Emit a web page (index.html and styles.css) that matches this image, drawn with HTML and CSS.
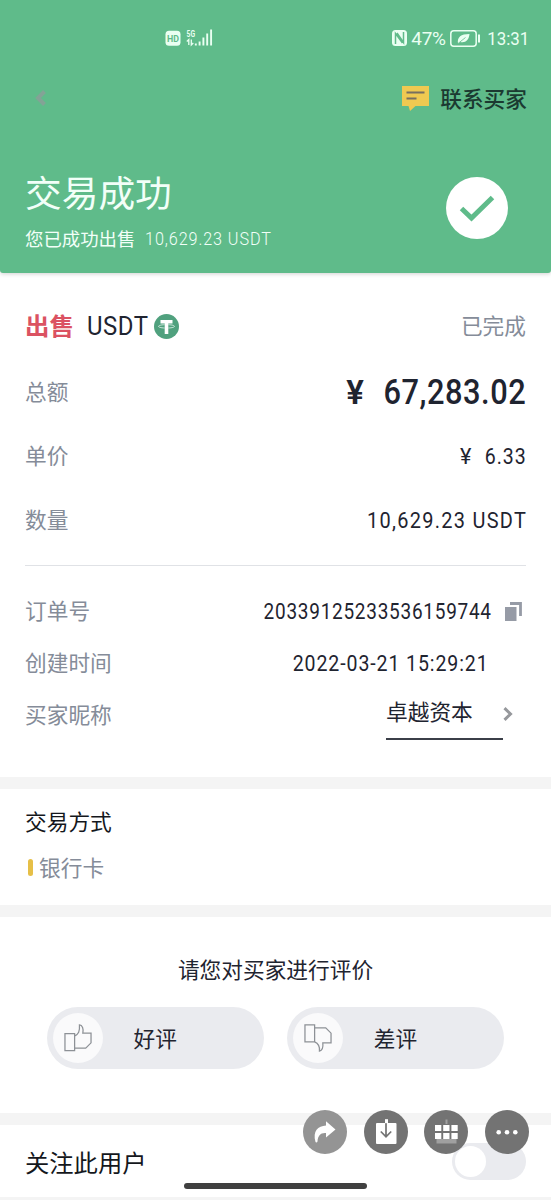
FILE: index.html
```html
<!DOCTYPE html>
<html lang="zh-CN">
<head>
<meta charset="utf-8">
<title>交易成功</title>
<link rel="stylesheet" href="styles.css">
</head>
<body>
<main class="screen">
  <header class="header">
    <div class="status">
      <svg class="status-signal" width="50" height="20" viewBox="0 0 50 20">
        <rect x="0.500" y="2.800" width="15" height="15" rx="3.500" fill="#eafff2"/>
        <text x="8" y="13.700" class="hd" text-anchor="middle" textLength="12" lengthAdjust="spacingAndGlyphs">HD</text>
        <text x="21.500" y="8.500" class="fiveg" textLength="8.500" lengthAdjust="spacingAndGlyphs">5G</text>
        <path d="M23.800 17v-5.500l-2 2M26.300 11.500v5.500l2-2" fill="none" stroke="#eafff2" stroke-width="1.300"/>
        <path d="M30.800 17.500v-2M34.600 17.500v-4M38.400 17.500v-8M42.200 17.500V5.500M46.100 17.500V1.500" stroke="#eafff2" stroke-width="1.900"/>
      </svg>
      <div class="status-right">
        <svg width="15" height="16" viewBox="0 0 15 16">
          <rect width="15" height="16" rx="3.500" fill="#eafff2"/>
          <path d="M3.500 14V3.500l7 9.500M11.500 2v10.500L5 3" fill="none" stroke="#5fbb8a" stroke-width="1.500"/>
        </svg>
        <span class="num battery">47%</span>
        <svg class="battery-icon" width="31" height="17" viewBox="0 0 31 17">
          <rect x="0.800" y="0.800" width="25.400" height="15.400" rx="3" fill="none" stroke="#eafff2" stroke-width="1.500"/>
          <path d="M29 4.500v8" stroke="#eafff2" stroke-width="2"/>
          <path d="M8 13.500c-1-6.500 3-9.500 11.500-9.500-.5 6-4 9-9 8z" fill="#eafff2"/>
          <path d="M8 13.500l7.500-6" stroke="#5fbb8a" stroke-width=".8"/>
        </svg>
        <span class="num clock">13:31</span>
      </div>
    </div>
    <nav class="nav">
      <svg class="back" width="12" height="16" viewBox="0 0 12 16"><path d="M10.500 1.500L4 8L10.500 14.500" fill="none" stroke="#83a396" stroke-width="4"/></svg>
      <div class="contact">
        <svg width="27" height="26" viewBox="0 0 27 26">
          <path d="M0 1h27v20H13.500L8 26l-1.500-5H0z" fill="#efc951"/>
          <path d="M4.500 7.500h18M4.500 13.500h10" stroke="#776f60" stroke-width="2"/>
        </svg>
        <span>联系买家</span>
      </div>
    </nav>
    <div class="hero">
      <div>
        <h1 class="hero-title">交易成功</h1>
        <p class="hero-sub"><span>您已成功出售</span><span class="num hero-num">10,629.23 USDT</span></p>
      </div>
      <svg width="62" height="62" viewBox="0 0 62 62"><circle cx="31" cy="31" r="31" fill="#fff"/><path d="M15.500 31.500L25.500 41L46.500 20.500" fill="none" stroke="#5fbb8a" stroke-width="5"/></svg>
    </div>
  </header>

  <section class="order">
    <div class="row row-head">
      <div class="coin">
        <strong class="sell">出售</strong>
        <span class="num usdt">USDT</span>
        <svg width="25" height="25" viewBox="0 0 25 25"><circle cx="12.500" cy="12.500" r="12.500" fill="#50a17e"/><path d="M6.500 6h12v3.400h-4.200V20h-3.600V9.400H6.500z" fill="#fff"/><path d="M10.700 10.700C2.500 11 2.500 13.700 10.700 14M14.300 10.700c8.200.3 8.200 3 0 3.300" fill="none" stroke="#e5f5ed" stroke-width=".8"/></svg>
      </div>
      <span class="label">已完成</span>
    </div>
    <div class="row"><span class="label">总额</span><span class="total"><span class="num yen-big">¥</span><span class="num total-num">67,283.02</span></span></div>
    <div class="row"><span class="label">单价</span><span class="price"><span class="num yen">¥</span><span class="num price-num">6.33</span></span></div>
    <div class="row"><span class="label">数量</span><span class="num amount">10,629.23 USDT</span></div>
    <hr class="divider">
    <div class="row detail"><span class="label">订单号</span>
      <span class="order-no"><span class="num order-num">20339125233536159744</span>
      <svg width="17" height="19" viewBox="0 0 17 19"><path d="M0 5h11.500v14H0z" fill="#969ba6"/><path d="M5 1.500h10.500v12.500" fill="none" stroke="#969ba6" stroke-width="2.800"/></svg></span>
    </div>
    <div class="row detail"><span class="label">创建时间</span><span class="num created">2022-03-21 15:29:21</span></div>
    <div class="row detail"><span class="label">买家昵称</span>
      <span class="buyer"><span class="buyer-name">卓越资本</span>
      <svg width="10" height="14" viewBox="0 0 10 14"><path d="M1.500 1.200L7.500 7L1.500 12.800" fill="none" stroke="#96989c" stroke-width="3"/></svg></span>
    </div>
  </section>

  <section class="method">
    <h2 class="method-title">交易方式</h2>
    <p class="bank"><i class="bank-mark"></i>银行卡</p>
  </section>

  <section class="rating">
    <p class="rating-title">请您对买家进行评价</p>
    <div class="pills">
      <button class="pill"><span class="disc"><svg width="28" height="28" viewBox="0 0 29 29"><path d="M1 10h10v17.500H1zM11 12.500c4-2 5.500-4.500 5-11.500 3 0 4.500 4 3.500 8.500H28v10L22.500 25H11" fill="none" stroke="#8d9196" stroke-width="1.300"/></svg></span><span class="pill-text">好评</span></button>
      <button class="pill"><span class="disc"><svg width="28" height="28" viewBox="0 0 29 29"><path d="M1 1h10v17.500H1zM11 4h11.500L28 9.500v10h-8.500c.5 5-.5 8-3.500 8.500.5-5-1.500-8-5-9.500" fill="none" stroke="#8d9196" stroke-width="1.300"/></svg></span><span class="pill-text">差评</span></button>
    </div>
  </section>

  <section class="follow">
    <span class="follow-text">关注此用户</span>
    <span class="toggle"><i class="knob"></i></span>
  </section>

  <div class="tools">
    <svg width="44" height="44" viewBox="0 0 44 44"><circle cx="22" cy="22" r="22" fill="#949494"/><path d="M12.500 32C9.500 21 15 16 23 15.500v-4.300L32.500 19.500 23 27.500v-4.500c-5.500-.5-8 2.500-8.500 8.500-.2 1-1.600 1.200-2 .5z" fill="#fff"/></svg>
    <svg width="44" height="44" viewBox="0 0 44 44"><circle cx="22" cy="22" r="22" fill="#737373"/><rect x="12" y="13" width="20.500" height="21" rx="1" fill="#fff"/><path d="M22 12v14.500M16.800 21.500l5.200 5.300 5.200-5.300" fill="none" stroke="#737373" stroke-width="1.700"/><path d="M22.500 9.200v4" stroke="#fff" stroke-width="3"/></svg>
    <svg width="44" height="44" viewBox="0 0 44 44"><circle cx="22" cy="22" r="22" fill="#737373"/><path d="M12.500 29h20v4.500h-20zM21.500 9.500h2V14h-2z" fill="#a0a0a0"/><path d="M11 15h6.300v6H11zM19.200 15h6.300v6h-6.300zM27.400 15h6.300v6h-6.300zM11 23h6.300v6H11zM19.200 23h6.300v6h-6.300zM27.400 23h6.300v6h-6.300z" fill="#fff"/></svg>
    <svg width="44" height="44" viewBox="0 0 44 44"><circle cx="22" cy="22" r="22" fill="#737373"/><g fill="#fff"><circle cx="13.700" cy="22.200" r="2.300"/><circle cx="22" cy="22.200" r="2.300"/><circle cx="30.300" cy="22.200" r="2.300"/></g></svg>
  </div>
  <div class="home-bar"></div>
</main>
</body>
</html>
```
FILE: styles.css
```css
* { box-sizing: border-box; }
body, h1, h2, p { margin: 0; font-weight: 400; }
body {
  background: #fff;
  color: #1f2430;
  font: 21.7px/32px "Noto Sans CJK SC", sans-serif;
}
svg { display: block; flex: none; }
.screen { position: relative; width: 551px; height: 1200px; overflow: hidden; }
.num { font-family: Roboto, "Noto Sans CJK SC", sans-serif; white-space: nowrap; display: inline-block; transform-origin: right; }

.header {
  height: 273px;
  background: #5fbb8a;
  border-radius: 0 0 3px 3px;
  box-shadow: 0 1px 4px #0000002e;
}
.status { height: 76px; padding: 0 22px 0 165px; display: flex; align-items: center; justify-content: space-between; color: #eafff2; }
.hd { font: 700 9.5px Roboto, sans-serif; fill: #5fbb8a; }
.fiveg { font: 700 9.5px Roboto, sans-serif; fill: #eafff2; }
.status-right { display: flex; align-items: center; }
.battery { font-size: 19px; margin: 2px 4px 0 4px; letter-spacing: -.3px; }
.clock { font-size: 19px; margin: 2px 0 0 1px; transform: scaleX(.89); }
.nav { height: 44px; padding: 0 24px 0 34px; display: flex; align-items: center; justify-content: space-between; }
.contact { display: flex; align-items: center; gap: 11px; color: #1b3a31; font-weight: 500; }
.hero { height: 153px; padding: 23px 43px 0 25px; display: flex; justify-content: space-between; color: #f2fff8; }
.hero > svg { margin-top: 34px; }
.hero-title { font-size: 36.7px; line-height: 54px; padding-top: 21px; margin-bottom: 5px; }
.hero-sub { font-size: 18.4px; line-height: 30px; display: flex; gap: 10px; }
.hero-num { font-size: 18px; font-weight: 300; letter-spacing: 1px; transform: scaleX(.9); transform-origin: left; padding-top: 1px; }

.order { height: 516px; padding: 20px 25px 0; border-bottom: 12px solid #f4f4f4; }
.row { height: 64px; display: flex; align-items: center; justify-content: space-between; }
.row-head { height: 67px; padding-bottom: 1px; }
.label { color: #858c99; padding-bottom: 2px; }
.coin { display: flex; align-items: center; }
.sell { font-size: 24.4px; color: #db5262; font-weight: 700; padding-bottom: 2px; }
.usdt { font-size: 26px; margin: 0 5px 0 13px; width: 62px; transform: scaleX(.92); transform-origin: left; letter-spacing: .6px; }
.total, .price { display: flex; align-items: center; }
.yen-big { font-size: 33px; font-weight: 600; margin-right: 15px; padding-top: 2px; }
.total-num { font-size: 35px; font-weight: 500; letter-spacing: .6px; margin-left: -15px; padding-top: 2px; transform: scaleX(.88); }
.yen { margin-right: 10px; padding-top: 1px; }
.price-num { letter-spacing: 1.1px; margin: 0 -1px; padding-top: 1px; transform: scaleX(.9); }
.amount { letter-spacing: 1.4px; margin-right: -1px; padding-top: 1px; transform: scaleX(.92); }
.divider { height: 1px; border: 0; margin: 13px 0 19px; background: #e0e2e6; }
.detail { height: 52px; }
.order-no { display: flex; align-items: center; gap: 14px; padding-right: 4px; }
.order-num { letter-spacing: .85px; margin-right: -1px; padding-top: 1px; transform: scaleX(.875); }
.created { margin-right: 37px; letter-spacing: 1px; padding-top: 1px; transform: scaleX(.9); }
.buyer { display: flex; align-items: center; padding: 0 13px 3px 0; }
.buyer-name { width: 117px; height: 52px; padding-top: 7px; border-bottom: 2px solid #3b3f48; }

.method { height: 128px; padding: 16px 25px 0; border-bottom: 12px solid #f4f4f4; color: #14171c; }
.method-title { font-size: 21.7px; line-height: 32px; }
.bank { display: flex; align-items: center; color: #858c99; margin-top: 14px; }
.bank-mark { width: 5px; height: 17px; margin: 0 6.500px 0 2.500px; border-radius: 3px; background: #e6bf47; }

.rating { height: 208px; padding: 36px 47px 0; border-bottom: 12px solid #f4f4f4; }
.rating-title { text-align: center; line-height: 32px; }
.pills { display: flex; gap: 23.500px; margin-top: 22px; }
.pill { width: 217px; height: 62px; border: 0; border-radius: 31px; padding: 0 6px 0 5.500px; background: #eaebef; display: flex; align-items: center; font: inherit; color: inherit; }
.disc { width: 50px; height: 50px; border-radius: 50%; background: #fafafb; display: flex; align-items: center; justify-content: center; }
.pill-text { margin-left: 31px; }

.follow { height: 75px; padding: 0 25px; border-bottom: 3px solid #f4f4f4; display: flex; align-items: center; justify-content: space-between; font-size: 24.3px; color: #14171c; }
.follow-text { padding-top: 1px; }
.toggle { width: 74px; height: 37px; border-radius: 19px; padding: 3px; background: #eaebef; }
.knob { display: block; width: 31px; height: 31px; border-radius: 50%; background: #fff; }

.tools { position: absolute; left: 303px; top: 1110px; display: flex; gap: 16.600px; }
.home-bar { position: absolute; left: 184px; top: 1183px; width: 183px; height: 6px; border-radius: 3px; background: #404040; }
```
